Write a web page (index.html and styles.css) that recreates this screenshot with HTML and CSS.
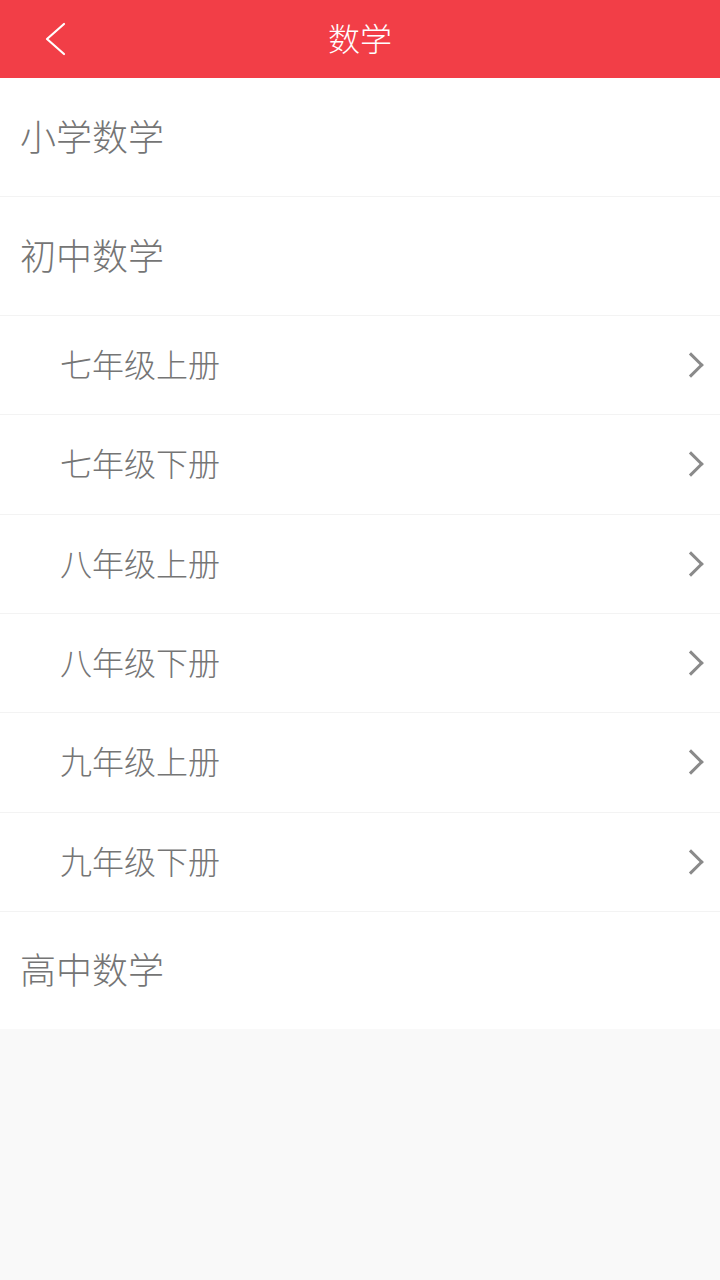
FILE: index.html
```html
<!DOCTYPE html>
<html lang="zh-CN">
<head>
    <meta charset="UTF-8">
    <meta name="viewport" content="width=device-width, initial-scale=1.0">
    <title>数学</title>
    <link rel="stylesheet" href="styles.css">
</head>
<body>
    <header class="topbar">
        <a class="back" href="#">
            <svg width="24" height="34" viewBox="0 0 24 34">
                <polyline points="20,2 3,17 20,32" fill="none" stroke="#fff" stroke-width="2.2" stroke-linecap="round" stroke-linejoin="round"/>
            </svg>
        </a>
        <h1>数学</h1>
    </header>

    <ul class="menu">
        <li class="group">小学数学</li>
        <li class="group">初中数学</li>
        <li class="book">七年级上册<span class="arrow"></span></li>
        <li class="book">七年级下册<span class="arrow"></span></li>
        <li class="book">八年级上册<span class="arrow"></span></li>
        <li class="book">八年级下册<span class="arrow"></span></li>
        <li class="book">九年级上册<span class="arrow"></span></li>
        <li class="book">九年级下册<span class="arrow"></span></li>
        <li class="group last">高中数学</li>
    </ul>
</body>
</html>
```

FILE: styles.css
```css
body {
    margin: 0;
    min-height: 1280px;
    background: #f9f9f9;
    font-family: "Noto Sans CJK SC", "Noto Sans", sans-serif;
    color: #757575;
}

.topbar {
    position: relative;
    display: flex;
    align-items: center;
    justify-content: center;
    height: 78px;
    background: #f23e47;
}

.topbar h1 {
    margin: 0 0 4px;
    font-size: 32px;
    font-weight: 300;
    color: #fff;
}

.back {
    position: absolute;
    left: 44px;
    top: 22px;
    display: block;
    width: 24px;
    height: 34px;
}

.menu {
    margin: 0;
    padding: 0;
    list-style: none;
    background: #fff;
}

.menu li {
    display: flex;
    align-items: center;
    border-bottom: 1px solid #f3f3f3;
    box-sizing: border-box;
    font-weight: 300;
}

.group {
    height: 119px;
    padding-left: 20px;
    padding-bottom: 5px;
    font-size: 36px;
}

.group.last {
    height: 117px;
    border-bottom: none !important;
}

.book {
    height: 99.33px;
    padding-left: 60px;
    padding-right: 18px;
    padding-bottom: 4px;
    font-size: 32px;
    justify-content: space-between;
}

.arrow {
    width: 18px;
    height: 18px;
    margin-right: 2px;
    margin-top: 4px;
    border-top: 3px solid #8a8a8a;
    border-right: 3px solid #8a8a8a;
    transform: rotate(45deg);
    box-sizing: border-box;
}
```
